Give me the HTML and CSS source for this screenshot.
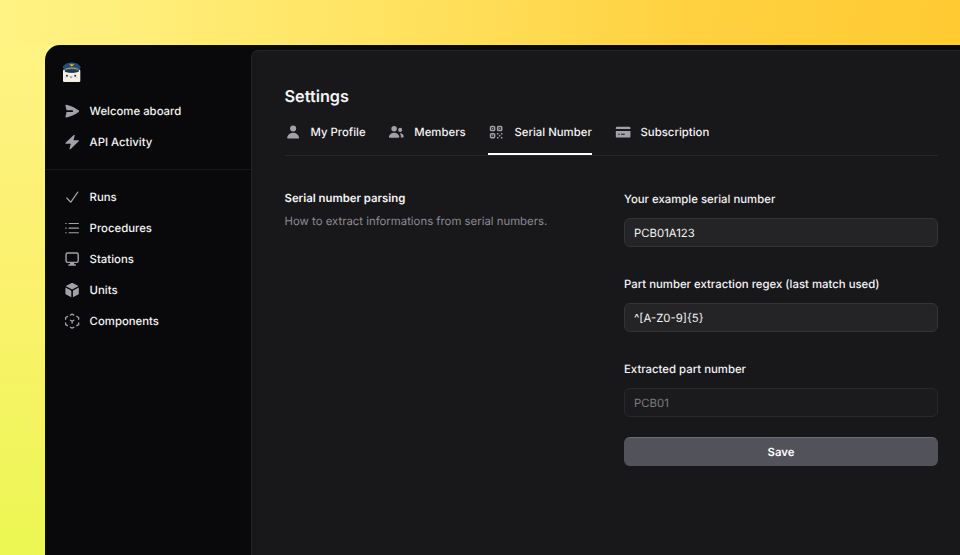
FILE: index.html
```html
<!DOCTYPE html>
<html lang="en">
<head>
<meta charset="utf-8">
<title>Settings</title>
<link rel="stylesheet" href="styles.css">
</head>
<body>
<div class="window">
  <aside class="sidebar">
    <div class="brand">
      <svg class="logo" viewBox="0 0 20 21">
        <rect x="1" y="7.5" width="17.300" height="12.5" rx="1.2" fill="#f5f0e5"/>
        <path d="M.8 4.6C3.300 1.2 6.300.5 9.5.5s6.600.7 9 4.100c.5 1.200-.4 2.200-1.700 2.900v2.200c-4 1.500-10 1.500-14 0V7.500C1.300 6.900.4 5.700.8 4.600z" fill="#234d72"/>
        <path d="M3.200 7.200q6.500-2 13 0" fill="none" stroke="#b69558" stroke-width="1.200"/>
        <path d="M3 9q6.600-1.500 13.500 0c-3.500 2-10 2-13.500 0z" fill="#183752"/>
        <path d="M7 1.800l2 .6.8-.9.8.9 2-.6-1.700 1.900-1.100.8-1.200-.8z" fill="#e1ad3c"/>
        <circle cx="5" cy="13.700" r="1" fill="#292c31"/><circle cx="13.200" cy="13.700" r="1" fill="#292c31"/>
        <path d="M7.800 14.700q1.200 1.300 2.500 0" fill="none" stroke="#484446" stroke-width=".8"/>
        <circle cx="3.600" cy="15.400" r=".8" fill="#f0c9b8"/><circle cx="14.800" cy="15.400" r=".8" fill="#f0c9b8"/>
      </svg>
    </div>
    <nav class="nav nav-top">
      <a class="nav-item"><svg class="icon" viewBox="0 0 16 16"><path fill="currentColor" d="M2.300 1.700C1.800 1.500 1.300 1.900 1.400 2.500L2.500 7.250H8.200a.75.75 0 0 1 0 1.500H2.500L1.400 13.500c-.1.600.4 1 .9.800 4.800-1.200 8.900-3 12.300-5.800.4-.3.400-.7 0-1C11.200 4.700 7.100 2.900 2.300 1.700z"/></svg><span>Welcome aboard</span></a>
      <a class="nav-item"><svg class="icon" viewBox="0 0 16 16"><path fill="currentColor" d="M9.600 1.100c.4-.5 1.200-.1 1 .5L9.300 6.100H14c.6 0 .8.600.5 1l-8.100 7.800c-.4.500-1.200.1-1-.5l1.300-4.900H2c-.6 0-.8-.6-.5-1z"/></svg><span>API Activity</span></a>
    </nav>
    <nav class="nav nav-main">
      <a class="nav-item"><svg class="icon" viewBox="0 0 16 16"><path fill="none" stroke="currentColor" stroke-width="1.200" stroke-linecap="round" stroke-linejoin="round" d="M2.700 8.900l4 4.100L13.600 3"/></svg><span>Runs</span></a>
      <a class="nav-item"><svg class="icon" viewBox="0 0 16 16"><path fill="none" stroke="currentColor" stroke-width="1.100" stroke-linecap="round" d="M5 3.400h9.200M5 8h9.200M5 12.600h9.200M1.700 3.400h.5M1.700 8h.5M1.700 12.600h.5"/></svg><span>Procedures</span></a>
      <a class="nav-item"><svg class="icon" viewBox="0 0 16 16"><rect x="2" y="2" width="12" height="9.200" rx="1.600" fill="none" stroke="currentColor" stroke-width="1.400"/><path fill="currentColor" d="M6 11h4v2h1c1 .2 1 1.300.6 1.600H4.400c-.4-.3-.4-1.400.6-1.600h1z"/></svg><span>Stations</span></a>
      <a class="nav-item"><svg class="icon" viewBox="0 0 16 16"><path fill="currentColor" d="M7.500 1.100a1 1 0 0 1 1 0l5.200 2.600c.3.200.3.500 0 .7L8.400 7.100a1 1 0 0 1-.8 0L2.300 4.400c-.3-.2-.3-.5 0-.7zM1.400 5.500l5.200 2.700c.4.200.6.500.6.900v5.800L2 12.200a1.200 1.200 0 0 1-.6-1zM14.600 5.500L9.400 8.200c-.4.200-.6.500-.6.900v5.800l5.200-2.700c.4-.2.600-.6.600-1z"/></svg><span>Units</span></a>
      <a class="nav-item"><svg class="icon" viewBox="0 0 16 16"><g fill="none" stroke="currentColor" stroke-width="1.300" stroke-linecap="round" stroke-linejoin="round"><path d="M6.300 2L8 1.200l1.700.8M12.500 3.400l1.900 1v1.800M14.400 9.800v1.700l-1.800 1M9.700 14L8 14.900 6.300 14M3.400 12.500l-1.800-1V9.800M1.600 6.200V4.400l1.900-1M6.300 7.100L8 8l1.700-.9M8 8v1.900"/></g></svg><span>Components</span></a>
    </nav>
  </aside>
  <main class="panel">
    <h1>Settings</h1>
    <nav class="tabs">
      <a class="tab"><svg class="icon" viewBox="0 0 16 16"><g fill="currentColor"><circle cx="8" cy="4.500" r="3"/><path d="M2.200 13.100C3 10.200 5.100 8.700 8 8.700s5 1.500 5.800 4.400c.2.800-.2 1.200-1 1.200H3.200c-.8 0-1.200-.4-1-1.200z"/></g></svg><span>My Profile</span></a>
      <a class="tab"><svg class="icon" viewBox="0 0 16 16"><g fill="currentColor"><circle cx="6" cy="4.600" r="2.700"/><circle cx="12" cy="5.800" r="2"/><path d="M.9 12.400c.7-2.500 2.500-3.900 5.100-3.900s4.400 1.400 5.100 3.900c.2.700-.1 1.100-.9 1.100H1.800c-.8 0-1.100-.4-.9-1.100zM12.600 13.200c.3-1.600-.2-2.900-1-4 2-.1 3.200.9 3.800 2.700.2.700-.1 1.300-.8 1.300z"/></g></svg><span>Members</span></a>
      <a class="tab active"><svg class="icon" viewBox="0 0 16 16"><g fill="none" stroke="currentColor" stroke-width="1.500"><rect x="2.500" y="2.500" width="4" height="4" rx=".9"/><rect x="9.500" y="2.500" width="4" height="4" rx=".9"/><rect x="2.500" y="9.500" width="4" height="4" rx=".9"/></g><path fill="currentColor" d="M4 4h1v1H4zM11 4h1v1h-1zM4 11h1v1H4zM8.800 8.800h1.500v1.500H8.800zM12.700 8.800h1.500v1.500h-1.500zM10.750 10.750h1.500v1.500h-1.500zM8.800 12.700h1.500v1.500H8.800zM12.700 12.700h1.500v1.500h-1.500z"/></svg><span>Serial Number</span></a>
      <a class="tab"><svg class="icon" viewBox="0 0 16 16"><path fill="currentColor" fill-rule="evenodd" d="M2 2.800h12A1.200 1.200 0 0 1 15.200 4v1H.8V4A1.200 1.200 0 0 1 2 2.800zM.8 6.800h14.400v5.400a1.200 1.200 0 0 1-1.200 1.200H2A1.200 1.200 0 0 1 .8 12.200zM3.200 9.500v1.200h1.500V9.500zm2.700 0v1.200h3.700V9.500z"/></svg><span>Subscription</span></a>
    </nav>
    <div class="content">
      <section class="intro">
        <h2>Serial number parsing</h2>
        <p>How to extract informations from serial numbers.</p>
      </section>
      <form class="form">
        <label for="serial">Your example serial number</label>
        <input id="serial" type="text" value="PCB01A123">
        <label for="regex">Part number extraction regex (last match used)</label>
        <input id="regex" type="text" value="^[A-Z0-9]{5}">
        <label for="part">Extracted part number</label>
        <input id="part" type="text" value="PCB01" disabled>
        <button type="button">Save</button>
      </form>
    </div>
  </main>
</div>
</body>
</html>
```
FILE: styles.css
```css
* { box-sizing: border-box; }
body {
  margin: 0;
  height: 555px;
  padding: 45px 0 0 45px;
  overflow: hidden;
  font: 500 11.375px/18px Inter, sans-serif;
  text-rendering: geometricPrecision;
  color: #f4f4f5;
  background:
    linear-gradient(180deg, #fff383 0, #fbf16e 230px, #e9f84e 555px) 0 45px / 60px 510px no-repeat,
    linear-gradient(95deg, #fff383 0, #fff07d 10%, #ffdf5a 45%, #ffd140 68%, #ffc930 100%);
}
.window {
  display: flex;
  height: 510px;
  background: #09090b;
  border-radius: 15px 0 0;
}
.sidebar { width: 206px; flex: none; }
.brand { height: 51px; padding: 16.500px 0 0 17px; }
.logo { display: block; width: 20px; height: 21px; }
.nav { display: flex; flex-direction: column; }
.nav-top { height: 74px; border-bottom: 1px solid #18181b; }
.nav-main { padding-top: 12px; }
.nav-item {
  display: flex;
  align-items: center;
  gap: 9.750px;
  height: 30.860px;
  padding-left: 18.600px;
}
.icon { width: 16.250px; height: 16.250px; flex: none; color: #a1a1aa; }
.panel {
  flex: 1;
  margin-top: 5px;
  padding: 33px 22px 0 32.500px;
  background: #18181b;
  border: 1px solid #242427;
  border-width: 1px 0 0 1px;
  border-radius: 7px 0 0;
}
h1 { margin: 0 0 1px; font-size: 16.250px; line-height: 24px; font-weight: 600; }
.tabs {
  display: flex;
  gap: 22.750px;
  height: 47px;
  border-bottom: 1px solid #272729;
}
.tab {
  display: flex;
  align-items: center;
  gap: 9.750px;
  height: 46px;
}
.tab.active { box-shadow: inset 0 -2px #fff; }
.content { display: flex; justify-content: space-between; padding-top: 33px; }
h2 { margin: -1px 0 0; font-size: 11.375px; line-height: 20px; font-weight: 600; }
.intro p { margin: 3.500px 0 0; color: #8b8b93; font-weight: 400; }
.form { width: 314px; display: flex; flex-direction: column; }
label { height: 20px; line-height: 20px; margin-bottom: 9px; }
input {
  height: 29px;
  margin: 0 0 27px;
  padding: 0 9px;
  font: 400 11.375px/18px Inter, sans-serif;
  text-rendering: inherit;
  color: #f4f4f5;
  background: #242427;
  border: 1px solid #343437;
  border-radius: 6px;
}
input:disabled { margin-bottom: 20px; color: #7b7b80; background: #1b1b1e; border-color: #29292c; }
button {
  height: 29px;
  padding: 0;
  border: 1px solid #52525b;
  border-top-color: #6c6c75;
  border-radius: 6px;
  background: #52525b;
  color: #fff;
  font: 600 11.375px/18px Inter, sans-serif;
  text-rendering: inherit;
}
```
